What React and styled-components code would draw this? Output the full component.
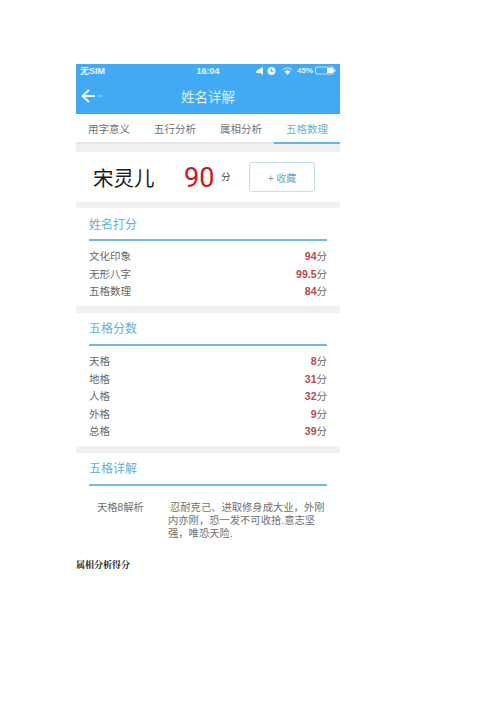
import styled, { createGlobalStyle } from "styled-components";

const GlobalStyle = createGlobalStyle`
  html, body {
    margin: 0;
    padding: 0;
    background: #fff;
  }
`;

const FONT = `"Liberation Sans", "Noto Sans CJK SC", sans-serif`;

const Page = styled.div`
  width: 500px;
  height: 707px;
  padding: 64px 0 0 76px;
  box-sizing: border-box;
  overflow: hidden;
  font-family: ${FONT};
`;

const Phone = styled.div`
  width: 264px;
  display: flex;
  flex-direction: column;
`;

const Header = styled.div`
  height: 50px;
  background: #42aaf5;
  color: #fff;
  display: flex;
  flex-direction: column;
`;

const StatusBar = styled.div`
  height: 13px;
  padding: 0 4px;
  display: grid;
  grid-template-columns: 1fr auto 1fr;
  align-items: center;
  font-size: 9px;
  font-weight: bold;
  color: #e8f5fe;
`;

const StatusRight = styled.div`
  display: flex;
  justify-content: flex-end;
  align-items: center;
  gap: 2px;
  font-size: 8px;
`;

const TitleBar = styled.div`
  flex: 1;
  display: grid;
  grid-template-columns: 1fr auto 1fr;
  align-items: center;
  padding: 0 5px;
`;

const Title = styled.div`
  font-size: 13.5px;
  color: #dff1fd;
`;

const Tabs = styled.div`
  height: 30px;
  display: grid;
  grid-template-columns: repeat(4, 1fr);
  background: #fff;
`;

const Tab = styled.div`
  display: flex;
  align-items: center;
  justify-content: center;
  font-size: 10.5px;
  color: ${({ $active }) => ($active ? "#6fb0cc" : "#707070")};
  border-bottom: ${({ $active }) => ($active ? "2px solid #62b6e6" : "2px solid #e6e6e6")};
  box-sizing: border-box;
`;

const Band = styled.div`
  height: ${({ $h }) => $h || 7}px;
  background: #f0f0f0;
`;

const NameCard = styled.div`
  height: 50px;
  display: flex;
  align-items: center;
  padding-left: 17px;
`;

const Name = styled.div`
  width: 91px;
  font-size: 20.5px;
  color: #1c1c1c;
`;

const Score = styled.div`
  font-family: Roboto, "Liberation Sans", sans-serif;
  font-size: 27px;
  color: #d4141c;
  width: 37px;
  margin-top: 2px;
`;

const ScoreUnit = styled.div`
  width: 28px;
  font-size: 9.5px;
  color: #444;
  margin-top: -3px;
`;

const CollectButton = styled.div`
  width: 66px;
  height: 30px;
  box-sizing: border-box;
  border: 1.5px solid #c2dfe6;
  border-radius: 3px;
  display: flex;
  align-items: center;
  justify-content: center;
  font-size: 10px;
  color: #62a9c4;
`;

const Section = styled.div`
  padding: 0 13px;
`;

const SectionTitle = styled.div`
  height: 33px;
  padding-bottom: 1px;
  display: flex;
  align-items: center;
  font-size: 12px;
  color: #62b2d4;
  border-bottom: 2px solid #6bbde3;
  box-sizing: border-box;
`;

const Rows = styled.div`
  padding: 6px 0 6px;
`;

const Row = styled.div`
  height: 17.6px;
  display: flex;
  align-items: center;
  justify-content: space-between;
  font-size: 10.5px;
  color: #666;
`;

const Value = styled.span`
  color: #666;
`;

const Num = styled.b`
  color: #b9474f;
  font-size: 10.5px;
`;

const Detail = styled.div`
  display: flex;
  padding: 15px 0 0 8px;
  height: 61px;
  box-sizing: border-box;
  font-size: 10.3px;
  line-height: 13px;
  color: #707070;
`;

const DetailLabel = styled.div`
  width: 71px;
  flex: none;
`;

const DetailText = styled.div`
  white-space: nowrap;
  text-indent: 2px;
`;

const Caption = styled.div`
  margin-top: 11px;
  font-family: "Liberation Serif", "Noto Serif CJK SC", serif;
  font-size: 9px;
  font-weight: bold;
  color: #222;
`;

const BackArrow = () => (
  <svg width="24" height="16" viewBox="0 0 24 16" fill="none">
    <path d="M1 8h13M8 2 1.5 8 8 14" stroke="#eef8ff" strokeWidth="2" />
    <path d="M16 8h5" stroke="#cfeafc" strokeWidth="1" strokeDasharray="1 1" />
  </svg>
);

const StatusIcons = () => (
  <svg width="39" height="10" viewBox="0 0 39 10" fill="#e8f5fe">
    <path d="M0 5 5 2l2-1.5V9L4 7H0z" />
    <circle cx="15.5" cy="5" r="4" />
    <path d="M15.5 3v2.4h1.8" stroke="#42aaf5" strokeWidth="1" fill="none" />
    <path d="M31.5 9 28.4 5.6a4.4 4.4 0 0 1 6.2 0z" />
    <path d="M26.4 4a7.4 7.4 0 0 1 10.2 0" stroke="#e8f5fe" strokeWidth="0.9" fill="none" />
  </svg>
);

const Battery = () => (
  <svg width="21" height="9" viewBox="0 0 21 9" fill="none">
    <rect x="0.5" y="1" width="18" height="7" rx="1.5" stroke="#e8f5fe" strokeWidth="0.8" />
    <rect x="12" y="2" width="6" height="5" fill="#fff" />
    <rect x="19.4" y="3" width="1" height="3" fill="#e8f5fe" />
  </svg>
);

const scores = [
  { label: "文化印象", value: "94" },
  { label: "无形八字", value: "99.5" },
  { label: "五格数理", value: "84" },
];

const grids = [
  { label: "天格", value: "8" },
  { label: "地格", value: "31" },
  { label: "人格", value: "32" },
  { label: "外格", value: "9" },
  { label: "总格", value: "39" },
];

const tabs = ["用字意义", "五行分析", "属相分析", "五格数理"];

const ScoreRows = ({ items }) => (
  <Rows>
    {items.map((item) => (
      <Row key={item.label}>
        <span>{item.label}</span>
        <Value>
          <Num>{item.value}</Num>分
        </Value>
      </Row>
    ))}
  </Rows>
);

const App = () => {
  return (
    <Page>
      <GlobalStyle />
      <Phone>
        <Header>
          <StatusBar>
            <span>无SIM</span>
            <span>16:04</span>
            <StatusRight>
              <StatusIcons />
              <span>45%</span>
              <Battery />
            </StatusRight>
          </StatusBar>
          <TitleBar>
            <BackArrow />
            <Title>姓名详解</Title>
          </TitleBar>
        </Header>
        <Tabs>
          {tabs.map((tab, i) => (
            <Tab key={tab} $active={i === 3}>
              {tab}
            </Tab>
          ))}
        </Tabs>
        <Band $h={8} />
        <NameCard>
          <Name>宋灵儿</Name>
          <Score>90</Score>
          <ScoreUnit>分</ScoreUnit>
          <CollectButton>+ 收藏</CollectButton>
        </NameCard>
        <Band $h={6} />
        <Section>
          <SectionTitle>姓名打分</SectionTitle>
          <ScoreRows items={scores} />
        </Section>
        <Band />
        <Section>
          <SectionTitle>五格分数</SectionTitle>
          <ScoreRows items={grids} />
        </Section>
        <Band />
        <Section>
          <SectionTitle>五格详解</SectionTitle>
          <Detail>
            <DetailLabel>天格8解析</DetailLabel>
            <DetailText>
              忍耐克己、进取修身成大业，外刚
              <br />
              内亦刚，恐一发不可收拾.意志坚
              <br />
              强，唯恐天险.
            </DetailText>
          </Detail>
        </Section>
      </Phone>
      <Caption>属相分析得分</Caption>
    </Page>
  );
};

export default App;
